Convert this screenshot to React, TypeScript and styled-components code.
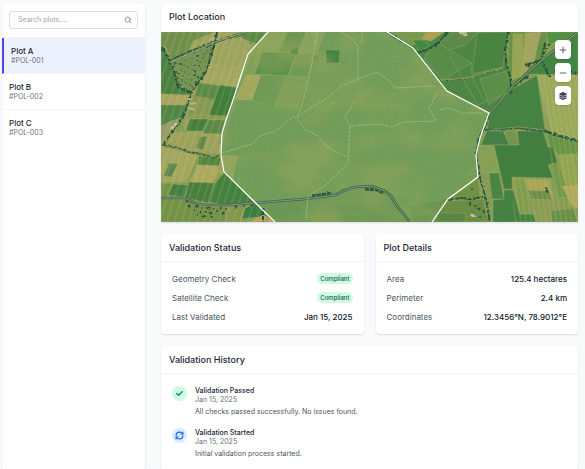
import React from "react";
import styled, { createGlobalStyle, css } from "styled-components";
import { FaCheck, FaLayerGroup } from "react-icons/fa";
import { Minus, Plus, RefreshCw, Search } from "lucide-react";

const GlobalStyle = createGlobalStyle`
  *, *::before, *::after { box-sizing: border-box; }
  body {
    margin: 0;
    background: #f8fafc;
    color: #1e2433;
    font-family: Inter, "Liberation Sans", sans-serif;
  }
  h2, h3, p, dl, dd, ol { margin: 0; padding: 0; }
  button, input { font: inherit; color: inherit; }
`;

const Page = styled.div`
  display: flex;
  gap: 16px;
  min-height: 100vh;
  padding: 4px 7px 1px 2px;
`;

const panel = css`
  background: #fff;
  border-radius: 4px;
  box-shadow: 0 1px 2px rgba(15, 23, 42, 0.12);
`;

const Sidebar = styled.aside`
  ${panel}
  flex: 0 0 143px;
  overflow: hidden;
`;

const SearchBar = styled.div`
  padding: 7px 7px 8px;
  border-bottom: 1px solid #f3f4f6;
`;

const SearchField = styled.label`
  display: flex;
  align-items: center;
  height: 18px;
  padding: 0 5px 0 8px;
  border: 1px solid #dcdfe4;
  border-radius: 3px;
  color: #8b93a1;
`;

const SearchInput = styled.input`
  flex: 1;
  min-width: 0;
  padding: 0;
  border: 0;
  outline: 0;
  background: transparent;
  font-size: 7px;
  line-height: 10px;
  &::placeholder { color: #9ca3af; opacity: 1; }
`;

const PlotItem = styled.button<{ $active?: boolean }>`
  display: block;
  width: 100%;
  height: 36px;
  padding: 0 7px;
  border: 0;
  border-bottom: 1px solid #f3f4f6;
  background: #fff;
  text-align: left;
  cursor: pointer;
  &:last-child { border-bottom: 0; }
  ${({ $active }) =>
    $active &&
    css`
      border-left: 2px solid #4f46e5;
      background: #edf1fe;
    `}
`;

const PlotName = styled.span`
  display: block;
  font-size: 8px;
  font-weight: 500;
  line-height: 10px;
`;

const PlotId = styled.span`
  display: block;
  color: #6b7280;
  font-size: 7px;
  line-height: 10px;
`;

const Main = styled.main`
  display: flex;
  flex: 1;
  flex-direction: column;
  gap: 12px;
  min-width: 0;
`;

const Card = styled.section<{ $grow?: boolean }>`
  ${panel}
  flex: ${({ $grow }) => ($grow ? "1 0 auto" : "0 0 auto")};
  min-width: 0;
`;

const CardHeader = styled.header<{ $plain?: boolean }>`
  padding: ${({ $plain }) => ($plain ? "5px 8px 7px" : "6px 8px 5px")};
  border-bottom: ${({ $plain }) => ($plain ? "0" : "1px solid #f3f4f6")};
`;

const CardTitle = styled.h2`
  font-size: 9px;
  font-weight: 500;
  line-height: 16px;
`;

const CardGrid = styled.div`
  display: grid;
  grid-template-columns: 1fr 1fr;
  gap: 12px;
`;

const Details = styled.dl`
  padding: 7px 11px 8px;
`;

const DetailRow = styled.div`
  display: flex;
  align-items: center;
  justify-content: space-between;
  height: 19px;
  font-size: 8px;
  line-height: 12px;
`;

const Term = styled.dt`
  color: #4b5563;
`;

const Value = styled.dd`
  color: #111827;
  font-weight: 500;
`;

const Badge = styled.span`
  display: block;
  padding: 0 3px;
  border-radius: 6px;
  background: #d1fae5;
  color: #065f46;
  font-size: 6px;
  font-weight: 500;
  line-height: 11px;
`;

const Timeline = styled.ol`
  display: grid;
  gap: 11px;
  padding: 12px 11px 11px;
  list-style: none;
`;

const TimelineItem = styled.li`
  display: flex;
  gap: 8px;
`;

const StatusIcon = styled.span<{ $tone: "pass" | "start" }>`
  display: grid;
  flex: 0 0 15px;
  place-items: center;
  height: 15px;
  border-radius: 50%;
  background: ${({ $tone }) => ($tone === "pass" ? "#d1fae5" : "#dbeafe")};
  color: ${({ $tone }) => ($tone === "pass" ? "#059669" : "#2563eb")};
`;

const EventTitle = styled.h3`
  font-size: 7px;
  font-weight: 500;
  line-height: 10px;
`;

const EventDate = styled.p`
  color: #6b7280;
  font-size: 7px;
  line-height: 8px;
`;

const EventText = styled.p`
  margin-top: 2px;
  color: #4b5563;
  font-size: 7px;
  line-height: 11px;
`;

const MapFrame = styled.div`
  position: relative;
`;

const MapDrawing = styled.svg`
  display: block;
  width: 100%;
  height: auto;
`;

const MapControls = styled.div`
  position: absolute;
  top: 8px;
  right: 7px;
  display: grid;
  gap: 4px;
`;

const MapButton = styled.button`
  display: grid;
  place-items: center;
  width: 16px;
  height: 19px;
  padding: 0;
  border: 0;
  border-radius: 4px;
  background: #fff;
  color: #374151;
  box-shadow: 0 1px 2px rgba(0, 0, 0, 0.15);
  cursor: pointer;
`;

const BOUNDARY =
  "107,0 87,22 72,68 65,88 61,101 60,123 63,140 114,190 271,190 287,167 317,145 315,123 319,106 328,81 286,59 252,16 226,0";

const BOUNDARY_LINES =
  "M107,0 L87,22 L72,68 L65,88 L61,101 L60,123 L63,140 L114,190 M271,190 L287,167 L317,145 L315,123 L319,106 L328,81 L286,59 L252,16 L226,0";

const fields: [string, string][] = [
  // west
  ["0,0 56,0 54,10 9,28 6,16 0,14", "#72924c"],
  ["32,9 54,0 84,0 58,9 28,18", "#a5a75d"],
  ["58,8 84,0 107,0 96,12 80,6", "#5b8d46"],
  ["56,10 80,5 91,14 84,35 48,32", "#a2a85f"],
  ["48,32 84,35 77,55 36,50", "#a8ab62"],
  ["0,14 7,26 17,55 30,61 26,64 0,62", "#498341"],
  ["31,61 60,53 53,83 25,84", "#8b9c53"],
  ["38,51 60,54 55,68 34,64", "#5c8c46"],
  ["59,53 78,56 66,84 48,83", "#407f3d"],
  ["0,62 28,63 25,73 0,73", "#b1a862"],
  ["0,73 25,73 22,86 0,95", "#518746"],
  ["0,94 10,89 20,86 3,112 0,113", "#9da067"],
  ["25,86 65,88 61,105 22,106", "#9aa75b"],
  ["29,87 48,87 42,99 25,99", "#477f3e"],
  ["48,88 64,88 61,104 40,104", "#5d8948"],
  ["10,100 60,102 59,122 18,117 4,112", "#a2a65e"],
  ["39,105 46,104 42,118 35,116", "#66894a"],
  ["0,114 37,124 24,150 0,150", "#aaab61"],
  ["8,131 17,132 10,145 3,144", "#60894b"],
  ["38,124 60,126 58,134 37,133", "#528742"],
  ["36,133 59,134 53,151 29,150", "#b2ad60"],
  ["61,123 77,124 71,147 57,140", "#98a55d"],
  ["28,150 53,151 47,171 24,166", "#497f3c"],
  ["54,151 64,140 93,170 66,173 47,170", "#438240"],
  ["12,152 27,153 23,165 6,163", "#438044"],
  ["0,152 12,151 6,165 0,165", "#779649"],
  ["0,167 24,167 42,175 66,174 64,190 0,190", "#779549"],
  ["67,174 84,174 79,190 66,190", "#88984e"],
  ["84,176 95,172 106,184 81,187", "#397e42"],
  ["88,190 102,183 114,190", "#c0a65b"],
  // within the plot
  ["107,0 126,0 118,20 89,22", "#8ba45b"],
  ["127,0 145,0 137,20 118,20", "#61924c"],
  ["145,0 164,0 156,21 137,20", "#8ba359"],
  ["101,20 136,21 126,44 94,42", "#4d8a45"],
  ["87,22 101,20 93,42 80,43", "#7b9f52"],
  ["85,43 100,43 91,68 74,68", "#b0aa5a"],
  ["100,43 125,44 114,75 91,69", "#699750"],
  ["125,45 146,46 136,76 114,74", "#7d9e54"],
  ["136,22 154,22 147,45 127,44", "#6c9750"],
  ["129,17 138,15 137,23 129,22", "#2a7536"],
  ["165,18 179,18 178,31 165,31", "#2a7536"],
  ["151,23 159,23 158,30 151,30", "#588a47"],
  // north east
  ["226,0 347,0 344,20 347,38 350,57 329,81 286,59 252,16", "#4e8745"],
  ["230,0 266,0 255,12 248,14", "#799b4b"],
  ["266,0 283,0 270,9 260,7", "#b5a153"],
  ["252,8 261,8 269,13 258,20", "#438742"],
  ["292,0 318,0 304,13 272,23 264,23", "#5e8b49"],
  ["277,11 311,31 282,48 263,26", "#5a8c49"],
  ["316,1 346,0 342,35 311,42", "#4a8540"],
  ["319,47 345,39 350,57 328,73", "#5c9048"],
  ["348,0 386,0 386,21 365,43 351,54 347,33", "#6a9248"],
  ["352,2 362,2 361,44 351,48", "#9ca755"],
  ["364,1 380,0 373,30 360,45", "#a8a75f"],
  ["385,0 417,0 405,8 388,12", "#54923f"],
  ["366,42 386,25 417,1 417,43", "#438542"],
  ["350,58 376,43 384,98 357,95 326,98 329,81", "#458342"],
  ["376,43 417,43 417,108 390,101", "#9eac5c"],
  ["326,99 342,99 349,113 320,113", "#438043"],
  ["343,99 354,98 358,113 348,113", "#78974d"],
  ["384,99 417,109 417,122 398,123 388,115", "#699548"],
  ["320,114 332,114 338,140 321,141", "#88a354"],
  ["333,113 358,113 356,99 382,99 387,115 392,115 397,131 387,133 392,146 351,145 351,157 343,157", "#417f3e"],
  ["328,141 338,141 343,167 331,167", "#4b8643"],
  ["343,158 352,158 359,182 372,182 375,190 332,190 332,168 343,167", "#438241"],
  ["352,146 364,147 372,182 359,182", "#819f4d"],
  ["364,147 388,148 392,167 369,165", "#aea956"],
  ["367,158 388,159 391,168 370,167", "#6d9148"],
  ["389,132 397,131 410,165 396,166", "#749a4c"],
  ["398,123 413,122 417,153 404,152", "#94a752"],
  ["401,154 417,153 417,177 411,174", "#b4ad5b"],
  ["390,179 412,176 417,190 391,190", "#67914a"],
  ["317,146 319,165 287,168", "#719447"],
  ["286,169 322,167 328,190 271,190", "#6c8f43"],
  ["277,181 305,181 304,190 274,190", "#5b8842"],
];

const treeLines = [
  "M1,15 L7,26 L13,40 L17,55 L30,61 L23,83 L14,96 L2,113",
  "M56,0 L54,10 L46,38 L30,61",
  "M226,0 L240,9 L252,16 M287,0 L277,11 L268,17 L255,21",
  "M347,0 L344,18 L346,35 L349,44 L350,56",
  "M384,11 L381,25 M364,33 L380,28 L389,45 M368,43 L350,57",
  "M384,99 L402,105 L417,109",
  "M328,82 L325,93 L318,106 L315,123 L319,146 L325,166 L329,190",
  "M286,168 L299,166 L309,167 L322,165",
  "M102,176 L102,190",
];

const tracks = [
  "M156,0 L153,20 L148,45 L143,66 L136,86",
  "M136,85 L148,77 L166,66 L180,54 L205,44 L216,40 L228,49 L234,56 L275,54",
  "M180,0 L191,7 L197,14 L197,47",
  "M276,61 L268,76 L275,89 L243,90 L231,95 L218,92 L189,94 L184,85 L194,69",
  "M189,94 L187,131 L165,153 L147,164 L145,188",
  "M61,121 L91,112 L99,104 L115,99 L133,84 L145,98 L157,104 L166,115 L187,126",
  "M278,78 L287,76 L302,81 L320,81 M201,0 L201,12",
];

const grove = [
  [11, 29], [16, 27], [21, 25], [27, 22], [33, 20], [39, 18], [46, 15], [50, 17], [13, 34], [19, 32],
  [25, 29], [31, 27], [37, 24], [43, 22], [48, 23], [15, 40], [20, 38], [27, 35], [33, 33], [39, 30],
  [45, 29], [17, 46], [22, 44], [28, 42], [34, 39], [40, 37], [45, 35], [19, 53], [25, 51], [31, 48],
  [37, 45], [25, 57], [31, 55], [35, 50], [18, 50], [42, 41], [14, 31], [23, 33], [29, 31], [36, 29],
  [42, 26], [47, 20], [18, 42], [24, 40], [31, 38], [38, 34], [21, 48], [27, 47], [34, 43], [29, 53],
];

const scrub = [
  [26, 169], [31, 170], [36, 174], [41, 176], [47, 176], [53, 177], [60, 176], [65, 177], [28, 174],
  [33, 178], [39, 180], [45, 180], [50, 181], [56, 179], [62, 181], [36, 183], [43, 184], [51, 185],
  [75, 175], [83, 174], [91, 173], [384, 14], [388, 13], [386, 17], [382, 21], [376, 30], [368, 34],
  [372, 32], [370, 38], [366, 46], [350, 60], [395, 37], [408, 42], [410, 40], [414, 41], [385, 156],
  [386, 159], [311, 157], [309, 172], [314, 174], [318, 177], [323, 180], [312, 182], [319, 185],
];

const river =
  "M0,166 L24,166 L34,171 L44,173 L67,173 L94,171 L118,169 L144,167 L174,163 L184,158 L194,155 L211,154 L224,159 L230,164 L236,174 L249,190";

function PlotMap() {
  return (
    <MapDrawing viewBox="0 0 417 190" role="img" aria-label="Satellite map of Plot A">
      <defs>
        <filter id="grain" x="0" y="0" width="100%" height="100%">
          <feTurbulence type="fractalNoise" baseFrequency="0.7" numOctaves="2" seed="8" />
          <feColorMatrix values="0 0 0 0 0.08  0 0 0 0 0.2  0 0 0 0 0.1  1.6 0 0 0 -0.65" />
        </filter>
        <filter id="patches" x="0" y="0" width="100%" height="100%" colorInterpolationFilters="sRGB">
          <feTurbulence type="fractalNoise" baseFrequency="0.016 0.026" numOctaves="3" seed="4" />
          <feColorMatrix values="0 0 0 0 0.6  0 0 0 0 0.66  0 0 0 0 0.36  0 3.2 0 0 -1.25" />
        </filter>
        <filter id="rough" x="-5%" y="-5%" width="110%" height="110%">
          <feTurbulence type="fractalNoise" baseFrequency="0.35" numOctaves="2" seed="3" />
          <feDisplacementMap in="SourceGraphic" scale="3" xChannelSelector="R" yChannelSelector="G" />
        </filter>
        <pattern id="furrows" width="7" height="8" patternUnits="userSpaceOnUse" patternTransform="rotate(18)">
          <path d="M1,0V8" stroke="#d8c373" strokeWidth="2" opacity="0.14" />
          <path d="M5,0V8" stroke="#285f2e" strokeWidth="1" opacity="0.07" />
        </pattern>
        <pattern id="furrowsEast" width="5" height="8" patternUnits="userSpaceOnUse" patternTransform="rotate(-9)">
          <path d="M1,0V8" stroke="#dcc878" strokeWidth="1" opacity="0.3" />
        </pattern>
        <clipPath id="plotClip"><polygon points={BOUNDARY} /></clipPath>
      </defs>
      <rect width="417" height="190" fill="#8b9e54" />
      <polygon points={BOUNDARY} fill="#6d9a56" />
      {fields.map(([points, fill]) => (
        <polygon key={points} points={points} fill={fill} stroke="#a4ad68" strokeWidth="0.4" />
      ))}
      <path d="M0,0H107L60,123L114,190H0Z" fill="url(#furrows)" />
      <path d="M376,43H417V190H352L352,146L392,146Z" fill="url(#furrowsEast)" />
      <g clipPath="url(#plotClip)">
        <path d="M0,172 L94,171 L174,164 L194,156 L211,155 L224,160 L249,190 H0Z" fill="#59894a" opacity="0.4" />
        <path d="M248,175 L287,167 L271,190 H252Z" fill="#4b8044" opacity="0.45" />
        <rect width="417" height="190" fill="#93b36c" opacity="0.2" />
        <rect width="417" height="190" filter="url(#patches)" opacity="0.55" />
      </g>
      <polygon points="9,29 54,12 46,38 30,60 17,55" fill="#7b9654" />
      <g fill="none" filter="url(#rough)">
        <g stroke="#22523a" strokeWidth="2" strokeDasharray="7 1 4 1">
          {treeLines.map((d) => <path key={d} d={d} />)}
        </g>
        <path d="M324,98 L357,96 L384,99" stroke="#3a6440" strokeWidth="2" />
        <path d="M84,0 L54,10 L28,20 L8,29" stroke="#395b3c" strokeWidth="2.4" strokeDasharray="6 1" />
        <path d="M2,113 L18,116 L27,120 L40,122 L54,126 L60,122" stroke="#42613f" strokeWidth="1.6" strokeDasharray="4 1" />
        <path d="M279,48 L295,47 L311,45 L325,40 L342,36" stroke="#8c985b" strokeWidth="1.6" />
        <path d="M279,49 L295,48 L311,46 L325,41 L342,37" stroke="#365f37" strokeWidth="1" strokeDasharray="2 4" />
        <path d="M204,157 L216,158 L223,162 M151,164 L171,161" stroke="#2a5a3d" strokeWidth="3" strokeDasharray="4 1" />
        <g fill="#285738">
          {grove.map(([x, y], i) => <circle key={`${x}-${y}`} cx={x} cy={y} r={i % 3 ? 0.7 : 1} />)}
          {scrub.map(([x, y], i) => <circle key={`${x}-${y}`} cx={x} cy={y} r={i % 2 ? 1 : 1.6} />)}
        </g>
        <path d="M27,67 L31,67 M30,72 L35,71 M28,76 L33,77 M48,8 L53,6" stroke="#c4b590" strokeWidth="2" />
        <path d="M10,97 L16,91 M299,1 L306,2 M310,183 L314,184" stroke="#d2c8b1" strokeWidth="2.5" />
      </g>
      <g fill="none" strokeLinejoin="round">
        <path d={river} stroke="#3f6048" strokeWidth="2.6" />
        <path d={river} stroke="#94a08c" strokeWidth="0.9" />
        <path d="M417,0 L381,28 L350,56 L329,81" stroke="#3c6340" strokeWidth="2.4" />
        <path d="M417,0 L381,28 L350,56 L329,81 M84,0 L54,10 L9,30" stroke="#a3a994" strokeWidth="1" />
        <path d="M331,97 L357,95 L384,98 M320,147 L326,166 L331,190" stroke="#9ba487" strokeWidth="0.6" />
        <g stroke="#b9cd95" strokeWidth="0.8" strokeDasharray="3 1" opacity="0.75">
          {tracks.map((d) => <path key={d} d={d} />)}
        </g>
        <path d="M289,25 L317,73 L324,70 L348,60 M310,30 L311,46 L324,70 M263,26 L278,49 M296,7 L307,0" stroke="#7b9e5a" strokeWidth="0.7" />
        <path d="M67,176 L66,190 M106,174 L106,190" stroke="#89995e" strokeWidth="1" />
      </g>
      <rect width="417" height="190" filter="url(#grain)" opacity="0.3" />
      <path d={BOUNDARY_LINES} fill="none" stroke="#fff" strokeWidth="1.2" />
    </MapDrawing>
  );
}

const plots = [
  { name: "Plot A", id: "#POL-001" },
  { name: "Plot B", id: "#POL-002" },
  { name: "Plot C", id: "#POL-003" },
];

const checks = ["Geometry Check", "Satellite Check"];

const details = [
  ["Area", "125.4 hectares"],
  ["Perimeter", "2.4 km"],
  ["Coordinates", "12.3456°N, 78.9012°E"],
];

const events = [
  {
    tone: "pass" as const,
    icon: <FaCheck size={7} />,
    title: "Validation Passed",
    text: "All checks passed successfully. No issues found.",
  },
  {
    tone: "start" as const,
    icon: <RefreshCw size={9} strokeWidth={3} />,
    title: "Validation Started",
    text: "Initial validation process started.",
  },
];

export default function App() {
  const [selected, setSelected] = React.useState("#POL-001");
  return (
    <>
      <GlobalStyle />
      <Page>
        <Sidebar>
          <SearchBar>
            <SearchField>
              <SearchInput type="text" placeholder="Search plots...." aria-label="Search plots" />
              <Search size={8} strokeWidth={3} aria-hidden />
            </SearchField>
          </SearchBar>
          <nav aria-label="Plots">
            {plots.map((plot) => (
              <PlotItem key={plot.id} type="button" $active={plot.id === selected} onClick={() => setSelected(plot.id)}>
                <PlotName>{plot.name}</PlotName>
                <PlotId>{plot.id}</PlotId>
              </PlotItem>
            ))}
          </nav>
        </Sidebar>
        <Main>
          <Card>
            <CardHeader $plain><CardTitle>Plot Location</CardTitle></CardHeader>
            <MapFrame>
              <PlotMap />
              <MapControls>
                <MapButton type="button" aria-label="Zoom in"><Plus size={10} strokeWidth={2} /></MapButton>
                <MapButton type="button" aria-label="Zoom out"><Minus size={10} strokeWidth={2} /></MapButton>
                <MapButton type="button" aria-label="Layers"><FaLayerGroup size={8} /></MapButton>
              </MapControls>
            </MapFrame>
          </Card>
          <CardGrid>
            <Card>
              <CardHeader><CardTitle>Validation Status</CardTitle></CardHeader>
              <Details>
                {checks.map((check) => (
                  <DetailRow key={check}>
                    <Term>{check}</Term>
                    <Value><Badge>Compliant</Badge></Value>
                  </DetailRow>
                ))}
                <DetailRow>
                  <Term>Last Validated</Term>
                  <Value>Jan 15, 2025</Value>
                </DetailRow>
              </Details>
            </Card>
            <Card>
              <CardHeader><CardTitle>Plot Details</CardTitle></CardHeader>
              <Details>
                {details.map(([term, value]) => (
                  <DetailRow key={term}>
                    <Term>{term}</Term>
                    <Value>{value}</Value>
                  </DetailRow>
                ))}
              </Details>
            </Card>
          </CardGrid>
          <Card $grow>
            <CardHeader><CardTitle>Validation History</CardTitle></CardHeader>
            <Timeline>
              {events.map((event) => (
                <TimelineItem key={event.title}>
                  <StatusIcon $tone={event.tone}>{event.icon}</StatusIcon>
                  <div>
                    <EventTitle>{event.title}</EventTitle>
                    <EventDate>Jan 15, 2025</EventDate>
                    <EventText>{event.text}</EventText>
                  </div>
                </TimelineItem>
              ))}
            </Timeline>
          </Card>
        </Main>
      </Page>
    </>
  );
}
